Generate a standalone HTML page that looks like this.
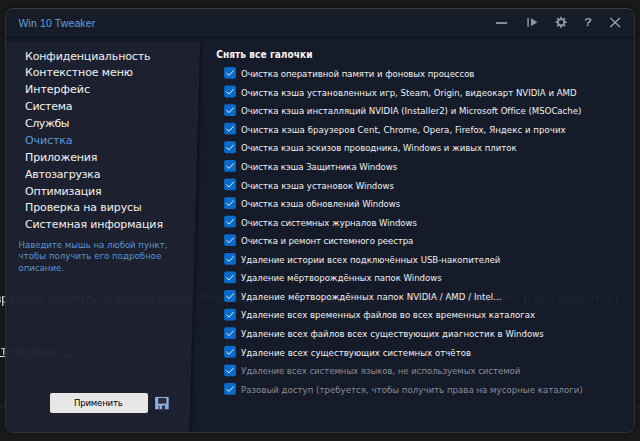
<!DOCTYPE html>
<html lang="ru"><head><meta charset="utf-8"><title>Win 10 Tweaker</title>
<style>
*{box-sizing:border-box;margin:0;padding:0}
html,body{width:640px;height:441px;overflow:hidden;background:#1a1a1a}
body{position:relative;font-family:"Liberation Sans",sans-serif}
.bgt{position:absolute;white-space:nowrap;color:#f4f4f4;font:13px/16px "Liberation Sans",sans-serif;filter:blur(.35px)}
.win{position:absolute;left:5px;top:8px;width:630px;height:425px;border-radius:8px;background:none;border:1px solid #323234;border-top-color:#3c3c3e;overflow:hidden;box-shadow:0 0 7px 1px rgba(0,0,0,.33)}
.win>*{position:absolute}
.title{left:12.6px;top:6px;height:16px;line-height:16px;font-size:10.5px;color:#64a0de;white-space:nowrap;letter-spacing:0.116px}
.tshadow{left:0;top:26.7px;width:630px;height:5.8px;background:linear-gradient(rgba(7,16,28,.3) 0%,rgba(7,16,28,.58) 22%,rgba(7,16,28,.3) 65%,rgba(7,16,28,0) 100%)}
.m{left:19px;height:16px;line-height:16px;font-family:"DejaVu Sans",sans-serif;font-size:11px;color:#f3f3f3;white-space:nowrap}
.m.sel{color:#5f98d6}
.h{left:12.5px;height:12px;line-height:12px;font-family:"DejaVu Sans Condensed","DejaVu Sans",sans-serif;font-size:9.5px;color:#5b93d3;white-space:nowrap}
.hd{left:210.25px;top:39px;height:14px;line-height:14px;font-family:"DejaVu Sans Condensed","DejaVu Sans",sans-serif;font-weight:bold;font-size:10px;color:#f6f6f6;white-space:nowrap;letter-spacing:0.076px}
.r{left:235px;height:14px;line-height:14px;font-family:"DejaVu Sans Condensed","DejaVu Sans",sans-serif;font-size:9.5px;color:#f1f1f1;white-space:nowrap}
.r.g{color:#888c9a}
.btn{left:44px;top:384px;width:98px;height:20px;border-radius:2px;background:#e7e7e7;color:#000;text-indent:-1.4px;font-family:"DejaVu Sans Condensed","DejaVu Sans",sans-serif;font-size:9.5px;line-height:20px;text-align:center;letter-spacing:-0.185px;white-space:nowrap}
.ic{overflow:visible}
.q{left:574.2px;top:5.1px;width:16px;height:16px;line-height:16px;text-align:center;font-family:"Liberation Sans",sans-serif;font-weight:bold;font-size:11.3px;color:#9da0ae;transform:scaleX(1.18);will-change:transform}
</style></head>
<body>
<div class="bgt" style="left:-5.6px;top:291px">вручную удалить, а можно через Windows</div>
<div class="bgt" style="right:22px;top:291px">(Параметры → Память), применить и всё удалится)</div>
<div class="bgt" style="left:-6.5px;top:343px;text-decoration:underline">ите файлы ...</div>
<div style="position:absolute;left:0;top:406px;width:640px;height:1px;background:#2d2d2d"></div>
<div class="win">
<svg class="ic" style="left:0;top:0" width="630" height="425" viewBox="6 9 630 425">
<defs><linearGradient id="sh" x1="0" x2="1" y1="0" y2="0"><stop offset="0" stop-color="#080a14" stop-opacity=".5"/><stop offset="1" stop-color="#05091a" stop-opacity="0"/></linearGradient></defs>
<rect x="0" y="0" width="640" height="36.5" fill="#181d2a" fill-opacity=".972"/>
<g transform="translate(0 36) skewX(-1.575)"><rect x="-30" y="0" width="230.3" height="5.3" fill="#171c2a" fill-opacity=".972"/><rect x="-30" y="5.3" width="230.3" height="400" fill="#1e2230" fill-opacity=".972"/><rect x="200.3" y="0" width="460" height="400" fill="#171c2a" fill-opacity=".972"/><rect x="200.3" y="5.3" width="4.8" height="400" fill="url(#sh)"/></g>
</svg>
<div class="tshadow"></div>
<div class="title">Win 10 Tweaker</div>
<svg class="ic" style="left:0;top:0" width="630" height="30" viewBox="6 9 630 30">
<rect x="496" y="22.2" width="11.2" height="1.7" fill="#9a9dac"/>
<rect x="527.1" y="17.9" width="1.9" height="8.8" fill="#767a8b"/>
<path d="M531 18.3 L537.4 22.3 L531 26.3 Z" fill="#9093a2"/>
<g fill="none" stroke="#9699a8"><circle cx="561.1" cy="22.2" r="3.1" stroke-width="1.8"/><path stroke-width="1.8" d="M565.00 22.20L566.65 22.20M563.86 24.96L565.02 26.12M561.10 26.10L561.10 27.75M558.34 24.96L557.18 26.12M557.20 22.20L555.55 22.20M558.34 19.44L557.18 18.28M561.10 18.30L561.10 16.65M563.86 19.44L565.02 18.28"/></g>

<path d="M610.3 17.8 L620 27 M620 17.8 L610.3 27" stroke="#abaebb" stroke-width="1.15" fill="none"/>
</svg>
<div class="m" style="top:40px;letter-spacing:-0.124px">Конфиденциальность</div>
<div class="m" style="top:56px;letter-spacing:-0.115px">Контекстное меню</div>
<div class="m" style="top:73px;letter-spacing:0.006px">Интерфейс</div>
<div class="m" style="top:90px;letter-spacing:-0.266px">Система</div>
<div class="m" style="top:107px;letter-spacing:-0.422px">Службы</div>
<div class="m sel" style="top:124px;letter-spacing:-0.109px">Очистка</div>
<div class="m" style="top:141px;letter-spacing:-0.146px">Приложения</div>
<div class="m" style="top:158px;letter-spacing:-0.25px">Автозагрузка</div>
<div class="m" style="top:175px;letter-spacing:-0.22px">Оптимизация</div>
<div class="m" style="top:191px;letter-spacing:-0.097px">Проверка на вирусы</div>
<div class="m" style="top:208px;letter-spacing:-0.113px">Системная информация</div>
<div class="h" style="top:230px;letter-spacing:-0.011px">Наведите мышь на любой пункт,</div>
<div class="h" style="top:241px;letter-spacing:0.067px">чтобы получить его подробное</div>
<div class="h" style="top:253px;letter-spacing:0.01px">описание.</div>
<div class="hd">Снять все галочки</div>
<svg class="ic" style="left:0;top:0" width="630" height="425" viewBox="6 9 630 425"><g transform="translate(224.1 67.00)"><rect width="11.8" height="11.8" rx="1.8" fill="#0b6bcb"/><path d="M2.3 6.1 L4.9 8.4 L9.6 3.4" fill="none" stroke="#f4f8fd" stroke-width=".95"/></g>
<g transform="translate(224.1 85.59)"><rect width="11.8" height="11.8" rx="1.8" fill="#0b6bcb"/><path d="M2.3 6.1 L4.9 8.4 L9.6 3.4" fill="none" stroke="#f4f8fd" stroke-width=".95"/></g>
<g transform="translate(224.1 104.18)"><rect width="11.8" height="11.8" rx="1.8" fill="#0b6bcb"/><path d="M2.3 6.1 L4.9 8.4 L9.6 3.4" fill="none" stroke="#f4f8fd" stroke-width=".95"/></g>
<g transform="translate(224.1 122.77)"><rect width="11.8" height="11.8" rx="1.8" fill="#0b6bcb"/><path d="M2.3 6.1 L4.9 8.4 L9.6 3.4" fill="none" stroke="#f4f8fd" stroke-width=".95"/></g>
<g transform="translate(224.1 141.36)"><rect width="11.8" height="11.8" rx="1.8" fill="#0b6bcb"/><path d="M2.3 6.1 L4.9 8.4 L9.6 3.4" fill="none" stroke="#f4f8fd" stroke-width=".95"/></g>
<g transform="translate(224.1 159.95)"><rect width="11.8" height="11.8" rx="1.8" fill="#0b6bcb"/><path d="M2.3 6.1 L4.9 8.4 L9.6 3.4" fill="none" stroke="#f4f8fd" stroke-width=".95"/></g>
<g transform="translate(224.1 178.54)"><rect width="11.8" height="11.8" rx="1.8" fill="#0b6bcb"/><path d="M2.3 6.1 L4.9 8.4 L9.6 3.4" fill="none" stroke="#f4f8fd" stroke-width=".95"/></g>
<g transform="translate(224.1 197.13)"><rect width="11.8" height="11.8" rx="1.8" fill="#0b6bcb"/><path d="M2.3 6.1 L4.9 8.4 L9.6 3.4" fill="none" stroke="#f4f8fd" stroke-width=".95"/></g>
<g transform="translate(224.1 215.72)"><rect width="11.8" height="11.8" rx="1.8" fill="#0b6bcb"/><path d="M2.3 6.1 L4.9 8.4 L9.6 3.4" fill="none" stroke="#f4f8fd" stroke-width=".95"/></g>
<g transform="translate(224.1 234.31)"><rect width="11.8" height="11.8" rx="1.8" fill="#0b6bcb"/><path d="M2.3 6.1 L4.9 8.4 L9.6 3.4" fill="none" stroke="#f4f8fd" stroke-width=".95"/></g>
<g transform="translate(224.1 252.90)"><rect width="11.8" height="11.8" rx="1.8" fill="#0b6bcb"/><path d="M2.3 6.1 L4.9 8.4 L9.6 3.4" fill="none" stroke="#f4f8fd" stroke-width=".95"/></g>
<g transform="translate(224.1 271.49)"><rect width="11.8" height="11.8" rx="1.8" fill="#0b6bcb"/><path d="M2.3 6.1 L4.9 8.4 L9.6 3.4" fill="none" stroke="#f4f8fd" stroke-width=".95"/></g>
<g transform="translate(224.1 290.08)"><rect width="11.8" height="11.8" rx="1.8" fill="#0b6bcb"/><path d="M2.3 6.1 L4.9 8.4 L9.6 3.4" fill="none" stroke="#f4f8fd" stroke-width=".95"/></g>
<g transform="translate(224.1 308.67)"><rect width="11.8" height="11.8" rx="1.8" fill="#0b6bcb"/><path d="M2.3 6.1 L4.9 8.4 L9.6 3.4" fill="none" stroke="#f4f8fd" stroke-width=".95"/></g>
<g transform="translate(224.1 327.26)"><rect width="11.8" height="11.8" rx="1.8" fill="#0b6bcb"/><path d="M2.3 6.1 L4.9 8.4 L9.6 3.4" fill="none" stroke="#f4f8fd" stroke-width=".95"/></g>
<g transform="translate(224.1 345.85)"><rect width="11.8" height="11.8" rx="1.8" fill="#0b6bcb"/><path d="M2.3 6.1 L4.9 8.4 L9.6 3.4" fill="none" stroke="#f4f8fd" stroke-width=".95"/></g>
<g transform="translate(224.1 364.44)"><rect width="11.8" height="11.8" rx="1.8" fill="#0b6bcb"/><path d="M2.3 6.1 L4.9 8.4 L9.6 3.4" fill="none" stroke="#f4f8fd" stroke-width=".95"/></g>
<g transform="translate(224.1 383.03)"><rect width="11.8" height="11.8" rx="1.8" fill="#0b6bcb"/><path d="M2.3 6.1 L4.9 8.4 L9.6 3.4" fill="none" stroke="#f4f8fd" stroke-width=".95"/></g></svg>
<div class="r" style="top:58px;letter-spacing:-0.043px">Очистка оперативной памяти и фоновых процессов</div>
<div class="r" style="top:77px;letter-spacing:0.021px">Очистка кэша установленных игр, Steam, Origin, видеокарт NVIDIA и AMD</div>
<div class="r" style="top:95px;letter-spacing:0.01px">Очистка кэша инсталляций NVIDIA (Installer2) и Microsoft Office (MSOCache)</div>
<div class="r" style="top:114px;letter-spacing:0.07px">Очистка кэша браузеров Cent, Chrome, Opera, Firefox, Яндекс и прочих</div>
<div class="r" style="top:132px;letter-spacing:-0.02px">Очистка кэша эскизов проводника, Windows и живых плиток</div>
<div class="r" style="top:151px;letter-spacing:-0.043px">Очистка кэша Защитника Windows</div>
<div class="r" style="top:170px;letter-spacing:0.006px">Очистка кэша установок Windows</div>
<div class="r" style="top:188px;letter-spacing:-0.039px">Очистка кэша обновлений Windows</div>
<div class="r" style="top:207px;letter-spacing:-0.047px">Очистка системных журналов Windows</div>
<div class="r" style="top:225px;letter-spacing:-0.088px">Очистка и ремонт системного реестра</div>
<div class="r" style="top:244px;letter-spacing:0.012px">Удаление истории всех подключённых USB-накопителей</div>
<div class="r" style="top:262px;letter-spacing:-0.023px">Удаление мёртворождённых папок Windows</div>
<div class="r" style="top:281px;letter-spacing:0.077px">Удаление мёртворождённых папок NVIDIA / AMD / Intel...</div>
<div class="r" style="top:299px;letter-spacing:0.007px">Удаление всех временных файлов во всех временных каталогах</div>
<div class="r" style="top:318px;letter-spacing:0.036px">Удаление всех файлов всех существующих диагностик в Windows</div>
<div class="r" style="top:337px;letter-spacing:0.049px">Удаление всех существующих системных отчётов</div>
<div class="r g" style="top:355px;letter-spacing:-0.038px">Удаление всех системных языков, не используемых системой</div>
<div class="r g" style="top:374px;letter-spacing:0.048px">Разовый доступ (требуется, чтобы получить права на мусорные каталоги)</div>
<div class="btn">Применить</div>
<svg class="ic" style="left:148px;top:387px" width="16" height="15" viewBox="154 396 16 15">
<rect x="154.6" y="396.4" width="14.6" height="13.4" fill="#12141d"/>
<rect x="155.1" y="396.9" width="13.6" height="12.4" fill="#8db0e2"/>
<rect x="158.2" y="398" width="8.2" height="5.6" fill="#2a2d3f"/>
<rect x="158.5" y="405.6" width="1" height="3.7" fill="#2a2d3f"/>
<rect x="162" y="405.6" width="3.1" height="3.7" fill="#2a2d3f"/>
</svg>
<div class="q">?</div>
</div>
</body></html>
